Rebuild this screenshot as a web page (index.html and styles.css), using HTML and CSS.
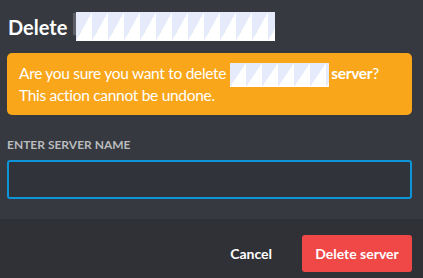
FILE: index.html
```html
<!DOCTYPE html>
<html lang="en">
<head>
<meta charset="utf-8">
<title>Delete server</title>
<link rel="stylesheet" href="styles.css">
</head>
<body>
<div class="modal">
  <div class="content">
    <div class="header">
      <h2 class="title">Delete</h2>
      <span class="caret"></span>
      <span class="redacted redacted-title"></span>
    </div>
    <div class="warning">
      <p>Are you sure you want to delete<span class="redacted redacted-inline"></span><strong>server</strong>?<br>This action cannot be undone.</p>
    </div>
    <label class="label" for="name">Enter server name</label>
    <input class="input" id="name" type="text">
  </div>
  <div class="footer">
    <button class="btn-cancel" type="button">Cancel</button>
    <button class="btn-delete" type="button">Delete server</button>
  </div>
</div>
</body>
</html>
```

FILE: styles.css
```css
* { box-sizing: border-box; }
html, body {
  margin: 0;
  padding: 0;
  height: 100%;
  background: #36393f;
  font-family: Lato, "Open Sans", sans-serif;
  color: #fff;
}
.modal {
  display: flex;
  flex-direction: column;
  height: 100%;
}
.content {
  padding: 12px 11px 20px 7px;
  display: flex;
  flex-direction: column;
}
.header {
  display: flex;
  align-items: center;
  padding-left: 1px;
}
.title {
  margin: 0;
  font-size: 20px;
  line-height: 24px;
  font-weight: 700;
}
.caret {
  width: 3px;
  height: 22px;
  margin-left: 6px;
  background: #5c5f66;
  align-self: flex-start;
  margin-top: 1px;
}
.redacted {
  display: inline-block;
  background-color: #fff;
  background-image: linear-gradient(to bottom right, #e6ebfb 50%, #ffffff 50%);
  background-size: 16px 100%;
}
.redacted-title {
  width: 199px;
  height: 29px;
}
.warning {
  margin-top: 12px;
  background: #faa61a;
  border-radius: 5px;
  padding: 10px 12px;
}
.warning p {
  margin: 0;
  font-size: 15.5px;
  line-height: 20px;
  font-weight: 400;
  letter-spacing: -0.3px;
}
.warning strong { font-weight: 700; }
.redacted-inline {
  width: 99px;
  height: 24px;
  vertical-align: middle;
  margin: -3px 2px -2px 4px;
}
.label {
  margin-top: 22px;
  font-size: 12px;
  line-height: 16px;
  font-weight: 700;
  text-transform: uppercase;
  color: #b9bbbe;
}
.input {
  margin-top: 7px;
  height: 39px;
  width: 100%;
  background: #303339;
  border: 2px solid #0c95d8;
  border-radius: 3px;
  outline: none;
  color: #fff;
  font: inherit;
  padding: 0 10px;
}
.footer {
  flex: 1;
  background: #2f3136;
  display: flex;
  justify-content: flex-end;
  align-items: flex-start;
  padding: 16px 11px 0 0;
  gap: 28px;
}
.btn-cancel, .btn-delete {
  font-family: inherit;
  font-size: 14px;
  font-weight: 700;
  color: #fff;
  border: none;
  cursor: pointer;
}
.btn-cancel {
  background: none;
  height: 37px;
  padding: 0 2px 0 0;
}
.btn-delete {
  background: #f04747;
  border-radius: 3px;
  width: 110px;
  height: 37px;
  padding: 0;
}
```
